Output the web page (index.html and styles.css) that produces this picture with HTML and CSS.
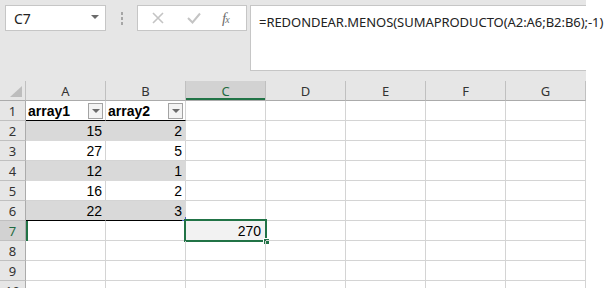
FILE: index.html
```html
<!DOCTYPE html>
<html lang="es">
<head>
	<meta charset="UTF-8">
	<title>REDONDEAR.MENOS</title>
	<link rel="stylesheet" href="styles.css">
</head>
<body>
	<div class="app">
		<div class="toolbar">
			<div class="namebox">
				<span>C7</span>
				<svg class="caret" width="8" height="5" viewBox="0 0 8 5"><path d="M0 0h8L4 4z" fill="#6b6b6b"/></svg>
			</div>
			<div class="grip"><i></i><i></i><i></i></div>
			<div class="fxbox">
				<svg width="12" height="12" viewBox="0 0 12 12"><path d="M1 1l10 10M11 1L1 11" stroke="#c4c4c4" stroke-width="1.6" fill="none"/></svg>
				<svg width="14" height="12" viewBox="0 0 14 12"><path d="M1 6l4.5 4.5L13 1.5" stroke="#c4c4c4" stroke-width="2" fill="none"/></svg>
				<span class="fx">f<sub>x</sub></span>
			</div>
			<div class="formula">=REDONDEAR.MENOS(SUMAPRODUCTO(A2:A6;B2:B6);-1)</div>
		</div>

		<div class="sheet">
			<div class="corner"><svg width="12" height="11" viewBox="0 0 12 11"><path d="M12 0v11H0z" fill="#bdbdbd"/></svg></div>
			<div class="colhead">A</div>
			<div class="colhead">B</div>
			<div class="colhead active">C</div>
			<div class="colhead">D</div>
			<div class="colhead">E</div>
			<div class="colhead">F</div>
			<div class="colhead">G</div>

			<div class="rowhead">1</div>
			<div class="cell th">array1<span class="filter"></span></div>
			<div class="cell th">array2<span class="filter"></span></div>
			<div class="cell"></div><div class="cell"></div><div class="cell"></div><div class="cell"></div><div class="cell"></div>

			<div class="rowhead">2</div>
			<div class="cell num band">15</div>
			<div class="cell num band">2</div>
			<div class="cell"></div><div class="cell"></div><div class="cell"></div><div class="cell"></div><div class="cell"></div>

			<div class="rowhead">3</div>
			<div class="cell num">27</div>
			<div class="cell num">5</div>
			<div class="cell"></div><div class="cell"></div><div class="cell"></div><div class="cell"></div><div class="cell"></div>

			<div class="rowhead">4</div>
			<div class="cell num band">12</div>
			<div class="cell num band">1</div>
			<div class="cell"></div><div class="cell"></div><div class="cell"></div><div class="cell"></div><div class="cell"></div>

			<div class="rowhead">5</div>
			<div class="cell num">16</div>
			<div class="cell num">2</div>
			<div class="cell"></div><div class="cell"></div><div class="cell"></div><div class="cell"></div><div class="cell"></div>

			<div class="rowhead">6</div>
			<div class="cell num band last">22</div>
			<div class="cell num band last">3<span class="resize"></span></div>
			<div class="cell"></div><div class="cell"></div><div class="cell"></div><div class="cell"></div><div class="cell"></div>

			<div class="rowhead active">7</div>
			<div class="cell"></div>
			<div class="cell"></div>
			<div class="cell num selected">270<span class="handle"></span></div>
			<div class="cell"></div><div class="cell"></div><div class="cell"></div><div class="cell"></div>

			<div class="rowhead">8</div>
			<div class="cell"></div><div class="cell"></div><div class="cell"></div><div class="cell"></div><div class="cell"></div><div class="cell"></div><div class="cell"></div>

			<div class="rowhead">9</div>
			<div class="cell"></div><div class="cell"></div><div class="cell"></div><div class="cell"></div><div class="cell"></div><div class="cell"></div><div class="cell"></div>

			<div class="rowhead">10</div>
			<div class="cell"></div><div class="cell"></div><div class="cell"></div><div class="cell"></div><div class="cell"></div><div class="cell"></div><div class="cell"></div>
		</div>
	</div>
</body>
</html>
```

FILE: styles.css
```css
html,
body {
	margin: 0;
	padding: 0;
	height: 288px;
	overflow: hidden;
	background: #fff;
}
body {
	font-family: "Liberation Sans", Arial, sans-serif;
	color: #000;
}
.app {
	width: 586px;
}

/* formula bar */
.toolbar {
	height: 81px;
	box-sizing: border-box;
	padding: 5px 0 0 5px;
	background: #e6e6e6;
	display: flex;
	align-items: flex-start;
}
.namebox,
.fxbox,
.formula {
	box-sizing: border-box;
	background: #fff;
	border: 1px solid #c6c6c6;
}
.namebox {
	flex: none;
	width: 101px;
	height: 26px;
	display: flex;
	align-items: center;
	justify-content: space-between;
	padding: 0 6px 0 8px;
	font-family: "Noto Sans", sans-serif;
	font-size: 14px;
	color: #222;
}
.namebox .caret {
	margin-top: -2px;
}
.grip {
	flex: none;
	width: 31px;
	height: 26px;
	display: flex;
	flex-direction: column;
	align-items: center;
	justify-content: center;
	gap: 2px;
}
.grip i {
	display: block;
	width: 2px;
	height: 3px;
	background: #a6a6a6;
}
.fxbox {
	flex: none;
	width: 110px;
	height: 26px;
	display: flex;
	align-items: center;
	padding: 0 10px 0 14px;
	gap: 23px;
}
.fx {
	font-family: "Liberation Serif", serif;
	font-style: italic;
	font-size: 15px;
	color: #6e6e6e;
	margin-left: -2px;
	line-height: 1;
}
.fx sub {
	font-size: 10px;
	vertical-align: 0;
	margin-left: -1px;
}
.formula {
	margin-left: 3px;
	flex: 1;
	min-width: 0;
	height: 66px;
	border-right: none;
	padding: 7px 0 0 8px;
	font-family: "Noto Sans", sans-serif;
	font-size: 13px;
	letter-spacing: -0.05px;
	color: #222;
	white-space: nowrap;
}

/* grid */
.sheet {
	display: grid;
	grid-template-columns: 26px repeat(7, 80px);
	grid-template-rows: repeat(11, 20px);
}
.sheet > div {
	box-sizing: border-box;
	border-right: 1px solid #d4d4d4;
	border-bottom: 1px solid #d4d4d4;
	position: relative;
}
.corner,
.colhead,
.rowhead {
	background: #e6e6e6;
	font-family: "Noto Sans", sans-serif;
	font-size: 13px;
	color: #333;
	display: flex;
	align-items: center;
	justify-content: center;
}
.sheet > .corner,
.sheet > .colhead {
	border-right-color: #c0c0c0;
	border-bottom-color: #ababab;
}
.sheet > .rowhead {
	border-right-color: #ababab;
	border-bottom-color: #c0c0c0;
}
.corner {
	align-items: flex-end;
	justify-content: flex-end;
	padding: 0 3px 3px 0;
}
.colhead.active {
	background: #d2d2d2;
	color: #1e6b41;
	box-shadow: inset 0 -2px 0 #217346;
}
.rowhead.active {
	background: #d2d2d2;
	color: #1e6b41;
	box-shadow: 2px 0 0 #217346;
	z-index: 1;
}
.cell {
	font-size: 14px;
	display: flex;
	align-items: center;
	padding: 0 3px 0 2px;
}
.num {
	justify-content: flex-end;
}
.th {
	font-weight: bold;
	background: #fff;
}
.sheet > .th {
	border-bottom: 1px solid #000;
}
.sheet > .band {
	background: #d9d9d9;
	border-right-color: #d9d9d9;
	border-bottom-color: #d9d9d9;
}
.sheet > .band.last {
	border-bottom-color: #000;
}
.filter {
	position: absolute;
	right: 2px;
	top: 2px;
	width: 15px;
	height: 16px;
	box-sizing: border-box;
	border: 1px solid #a3a3a3;
	background: #f3f3f3;
}
.filter::after {
	content: "";
	position: absolute;
	left: 3px;
	top: 5px;
	border-left: 4px solid transparent;
	border-right: 4px solid transparent;
	border-top: 4px solid #6b6b6b;
}
.resize {
	position: absolute;
	right: -1px;
	bottom: -1px;
	width: 3px;
	height: 3px;
	border-right: 1px solid #4f5fc6;
	border-bottom: 1px solid #4f5fc6;
}
.selected {
	background: #f2f2f2;
	padding-right: 4px;
}
.selected::before {
	content: "";
	position: absolute;
	left: -2px;
	top: -2px;
	right: -2px;
	bottom: -2px;
	border: 2px solid #217346;
}
.handle {
	position: absolute;
	right: -4px;
	bottom: -4px;
	width: 5px;
	height: 5px;
	background: #217346;
	border: 1px solid #fff;
	border-width: 1px 0 0 1px;
}
```
